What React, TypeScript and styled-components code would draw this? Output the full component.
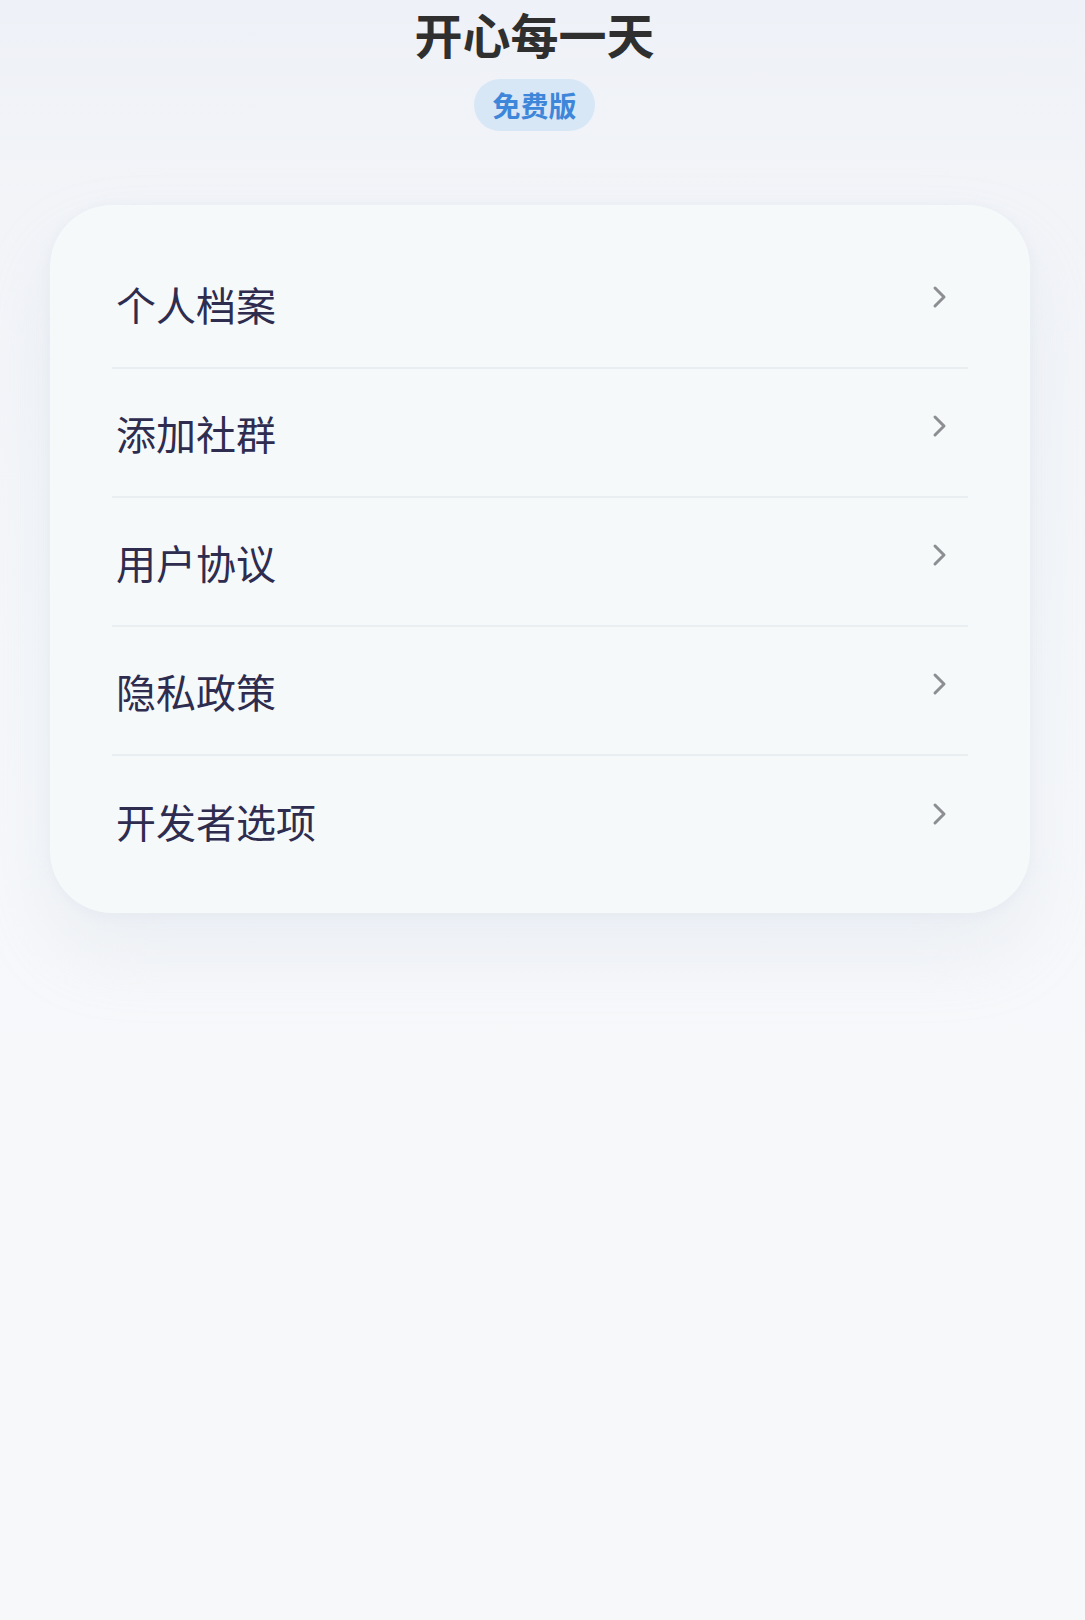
import styled, { createGlobalStyle } from 'styled-components';

const GlobalStyle = createGlobalStyle`
    html, body {
        margin: 0;
        padding: 0;
    }
    body {
        background: #f6f7fa;
        font-family: "Noto Sans CJK SC", "Noto Sans", sans-serif;
    }
`;

const menuItems = ['个人档案', '添加社群', '用户协议', '隐私政策', '开发者选项'];

const Chevron = () => (
    <ChevronIcon viewBox="0 0 16 24" width="16" height="24">
        <polyline
            points="3,3 12,12 3,21"
            fill="none"
            stroke="#8d8e92"
            strokeWidth="3"
            strokeLinecap="round"
            strokeLinejoin="round"
        />
    </ChevronIcon>
);

export default function App() {
    return (
        <>
            <GlobalStyle />
            <Page>
                <Header>
                    <Title>开心每一天</Title>
                    <Badge>免费版</Badge>
                </Header>
                <Card>
                    {menuItems.map((text, i) => (
                        <Row key={text} last={i === menuItems.length - 1}>
                            <RowText>{text}</RowText>
                            <Chevron />
                        </Row>
                    ))}
                </Card>
            </Page>
        </>
    );
}

const Page = styled.div`
    min-height: 1620px;
    box-sizing: border-box;
    padding-top: 5px;
    background: linear-gradient(
        180deg,
        #eef1f7 0px,
        #f2f4f8 200px,
        #f5f7fa 700px,
        #f7f8fa 1100px
    );
`;

const Header = styled.div`
    display: flex;
    flex-direction: column;
    align-items: center;
    padding-right: 16px;
`;

const Title = styled.h1`
    margin: 0;
    font-size: 48px;
    line-height: 56px;
    font-weight: 700;
    color: #2f2f2f;
`;

const Badge = styled.span`
    margin-top: 18px;
    height: 52px;
    line-height: 52px;
    padding: 0 18px;
    border-radius: 26px;
    background: #d8e7f6;
    color: #3e86d9;
    font-size: 28px;
    font-weight: 700;
`;

const Card = styled.div`
    margin: 74px 55px 0 50px;
    padding: 35px 62px 28px;
    border-radius: 62px;
    background: #f5f9fa;
    box-shadow: 0 40px 70px rgba(195, 210, 225, 0.22),
        0 2px 14px rgba(205, 215, 228, 0.2);
`;

const Row = styled.div<{ last: boolean }>`
    display: flex;
    align-items: center;
    justify-content: space-between;
    height: 129px;
    box-sizing: border-box;
    border-bottom: ${props => (props.last ? 'none' : '2px solid #e9eef1')};
`;

const RowText = styled.span`
    padding-left: 4px;
    font-size: 40px;
    font-weight: 400;
    color: #2e2c4f;
`;

const ChevronIcon = styled.svg`
    margin-right: 20px;
    margin-bottom: 14px;
`;
